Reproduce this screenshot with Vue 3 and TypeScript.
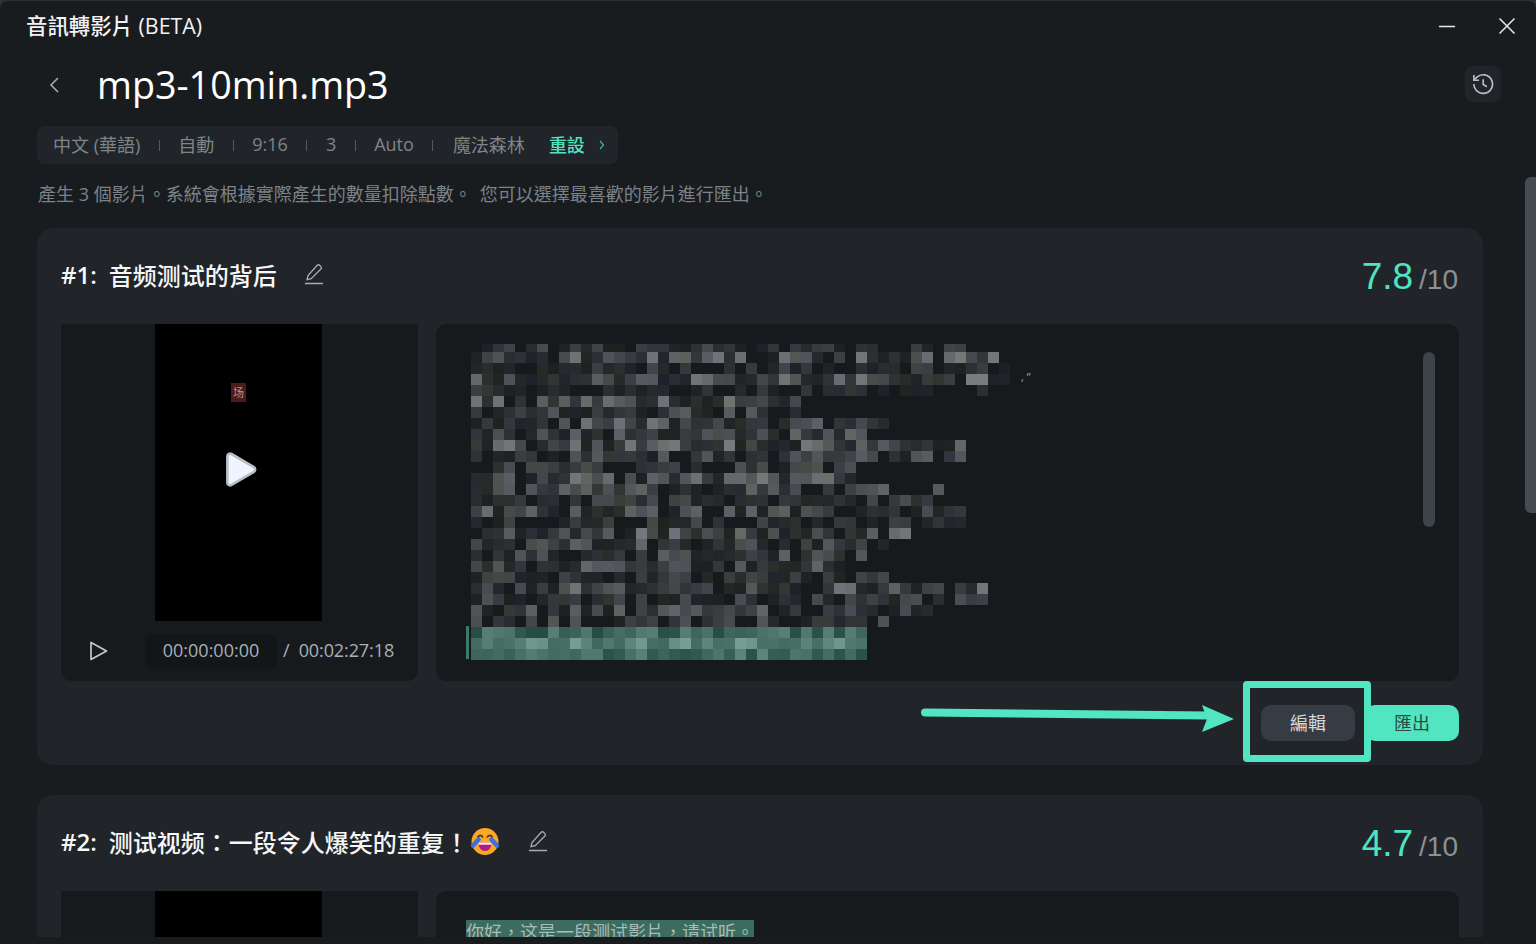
<script setup lang="ts">
import { computed } from 'vue'

interface Clip {
  id: number
  title: string
  score: string
  emoji: boolean
  blurred: boolean
}

interface Cell {
  key: string
  x: number
  y: number
  h: number
  fill: string
}

const tags = ['中文 (華語)', '自動', '9:16', '3', 'Auto', '魔法森林']

const clips: Clip[] = [
  { id: 1, title: '音频测试的背后', score: '7.8', emoji: false, blurred: true },
  { id: 2, title: '测试视频：一段令人爆笑的重复！', score: '4.7', emoji: true, blurred: false }
]

// right edge of each blurred line, in px from the left of the text
const rowEnds = [
  490, 528, 538, 538, 538, 330, 330, 418, 396, 495, 506, 396, 385, 473, 462, 495, 495, 440, 418, 396,
  396, 418, 517, 517, 462, 451, 396, 396, 396
]

// how bright each blurred line is, read off the reference
const rowGain = [
  0.5, 1.05, 0.4, 1.05, 0.35, 1, 0.75, 0.95, 0.8, 1, 0.75, 0.55, 1, 0.8, 0.5, 0.85, 0.45, 1, 0.8, 0.8,
  0.8, 0.45, 1, 0.55, 0.95, 0.6, 1, 1, 1
]

const cells = computed<Cell[]>(() => {
  let seed = 7919
  const rnd = () => {
    seed = (seed * 16807) % 2147483647
    return seed / 2147483647
  }
  const out: Cell[] = []
  rowEnds.forEach((end, r) => {
    const green = r >= 26
    const gain = rowGain[r]
    const y = r === 0 ? 0 : 8 + (r - 1) * 11
    const h = r === 0 ? 8 : 11
    for (let c = 0; c * 11 < end; c++) {
      const v = rnd()
      const l = rnd()
      if (green) {
        const boost = r === 27 ? 32 : r === 26 ? 4 : 10
        const k = Math.pow(l, 1.6) * 55 + boost
        out.push({
          key: `${r}-${c}`,
          x: 5 + c * 11,
          y,
          h,
          fill: `rgb(${Math.round(32 + k)},${Math.round(72 + k)},${Math.round(62 + k)})`
        })
        continue
      }
      if (v < 0.1 + (1 - gain) * 0.45) continue
      const k = 30 + Math.pow(l, 1.5) * 88 * gain
      const tint = rnd() * 10 - 3
      out.push({
        key: `${r}-${c}`,
        x: 5 + c * 11,
        y,
        h,
        fill: `rgb(${Math.round(k)},${Math.round(k + 3)},${Math.round(k + tint + 3)})`
      })
    }
  })
  return out
})
</script>

<template>
  <div class="window">
    <header class="titlebar">
      <span class="app-name">音訊轉影片 (BETA)</span>
      <div class="window-btns">
        <svg width="18" height="18" viewBox="0 0 18 18"><path d="M1 9.500h16" stroke="#e6e8ea" stroke-width="1.400" /></svg>
        <svg width="18" height="18" viewBox="0 0 18 18">
          <path d="M1.500 1.500l15 15M16.500 1.500l-15 15" stroke="#e6e8ea" stroke-width="1.500" fill="none" />
        </svg>
      </div>
    </header>

    <main class="main">
      <div class="scroll-thumb"></div>

      <div class="file-head">
        <svg class="back" width="12" height="18" viewBox="0 0 12 18">
          <path d="M10 2L3 9l7 7" stroke="#a9afb4" stroke-width="1.500" fill="none" />
        </svg>
        <h1 class="file-name">mp3-10min.mp3</h1>
        <button class="history">
          <svg width="26" height="26" viewBox="0 0 24 24" fill="none" stroke="#b9bec2" stroke-width="1.500">
            <path d="M3.600 12a8.600 8.600 0 1 0 2.800-6.300L3.800 8.200" />
            <path d="M3.600 3.800v4.700h4.700" />
            <path d="M12.200 7.600v4.900l3.400 2" />
          </svg>
        </button>
      </div>

      <div class="tagbar">
        <template v-for="(tag, i) in tags" :key="tag">
          <span class="tag">{{ tag }}</span>
          <i v-if="i < tags.length - 1" class="sep"></i>
        </template>
        <span class="reset">重設</span>
        <svg width="6" height="10" viewBox="0 0 6 10" class="reset-arrow">
          <path d="M1 1l3.500 4-3.500 4" stroke="#3fb79c" stroke-width="1.200" fill="none" />
        </svg>
      </div>

      <p class="hint">
        <span>產生 3 個影片。系統會根據實際產生的數量扣除點數。</span>
        <span class="hint-rest">您可以選擇最喜歡的影片進行匯出。</span>
      </p>

      <section v-for="clip in clips" :key="clip.id" class="card">
        <div class="card-head">
          <div class="card-title">
            <span class="num">#{{ clip.id }}:</span>
            <span>{{ clip.title }}</span>
            <svg v-if="clip.emoji" class="emoji" width="28" height="29" viewBox="0 0 28 29">
              <circle cx="14" cy="14.500" r="13.500" fill="#f9a825" />
              <path d="M6.500 10.500c1.200-2.800 4.300-2.800 5.500 0M16 10.500c1.200-2.800 4.300-2.800 5.500 0" stroke="#4a3320" stroke-width="1.700" fill="none" />
              <path d="M7.500 15.500h13c0 5-2.700 8.500-6.500 8.500s-6.500-3.500-6.500-8.500z" fill="#b5197e" />
              <path d="M7.500 15.500h13v2.200h-13z" fill="#f4eef0" />
              <path d="M7.500 12.500L2 18.500M20.500 12.500l5.500 6" stroke="#3f6fd8" stroke-width="4.500" stroke-linecap="round" fill="none" />
            </svg>
            <svg class="pencil" width="20" height="22" viewBox="0 0 20 22" fill="none">
              <path
                d="M13.200 2.300a1.700 1.700 0 0 1 2.400 0l1.300 1.300a1.700 1.700 0 0 1 0 2.400L7.200 15.700l-4.200 1 1-4.200z"
                stroke="#a8adb1"
                stroke-width="1.300"
              />
              <path d="M1 20.500h18" stroke="#a8adb1" stroke-width="1.500" />
            </svg>
          </div>
          <div class="score">
            <span class="score-value">{{ clip.score }}</span>
            <span class="score-max">/10</span>
          </div>
        </div>

        <div class="panels">
          <div class="player">
            <div class="stage">
              <template v-if="clip.blurred">
                <span class="caption">场</span>
                <svg class="stage-play" width="36" height="40" viewBox="0 0 34 38">
                  <path
                    d="M5 6c0-2 2.200-3.200 3.900-2.200l21.300 12.500c1.600 1 1.600 3.400 0 4.400L8.900 33.200C7.200 34.200 5 33 5 31z"
                    fill="#eef5ff"
                    stroke="#b8bfc7"
                    stroke-width="2.500"
                    stroke-linejoin="round"
                  />
                </svg>
              </template>
            </div>
            <div class="controls">
              <svg width="20" height="22" viewBox="0 0 20 22">
                <path d="M3 2.500v17l15.500-8.500z" fill="none" stroke="#c4c8cc" stroke-width="1.700" stroke-linejoin="round" />
              </svg>
              <span class="timecode">00:00:00:00</span>
              <span class="duration">/&nbsp;&nbsp;00:02:27:18</span>
            </div>
          </div>

          <div class="transcript" :class="{ 'transcript-plain': !clip.blurred }">
            <template v-if="clip.blurred">
              <svg class="mosaic" width="580" height="322" viewBox="0 0 580 322">
                <rect v-for="cell in cells" :key="cell.key" :x="cell.x" :y="cell.y" width="11" :height="cell.h" :fill="cell.fill" />
                <rect x="0" y="282" width="3" height="33" fill="#3c7a6a" />
                <text x="555" y="37" class="stray">, ”</text>
              </svg>
              <div class="text-thumb"></div>
            </template>
            <span v-else class="highlight">你好，这是一段测试影片，请试听。</span>
          </div>
        </div>

        <div class="actions">
          <button class="btn btn-edit">編輯</button>
          <button class="btn btn-export">匯出</button>
          <template v-if="clip.id === 1">
            <div class="callout"></div>
            <svg class="callout-arrow" width="316" height="30" viewBox="0 0 316 30">
              <path d="M4 7.500L286 10.500" stroke="#52e5c1" stroke-width="8" stroke-linecap="round" />
              <path d="M281 0l32 14-32 13 5-13z" fill="#52e5c1" />
            </svg>
          </template>
        </div>
      </section>
    </main>
  </div>
</template>

<style>
html,
body {
  margin: 0;
  background: #2c3136;
}
</style>

<style scoped>
.window {
  position: relative;
  box-sizing: border-box;
  width: 1536px;
  height: 944px;
  display: flex;
  flex-direction: column;
  padding-bottom: 7px;
  overflow: hidden;
  background: #191c1f;
  border-top: 1px solid #2c3136;
  border-radius: 8px 8px 0 0;
  font-family: 'Open Sans', 'Noto Sans CJK TC', sans-serif;
  color: #fff;
}

.titlebar {
  flex: none;
  height: 49px;
  display: flex;
  align-items: center;
  justify-content: space-between;
  padding: 0 20px 0 26px;
}

.app-name {
  margin-bottom: 3px;
  font-size: 21.4px;
  font-weight: 500;
  color: #f2f3f4;
}

.window-btns {
  display: flex;
  gap: 42px;
}

.main {
  position: relative;
  flex: 1;
  min-height: 0;
  overflow: hidden;
  padding: 0 53px 0 37px;
}

.scroll-thumb {
  position: absolute;
  top: 127px;
  right: 0;
  width: 11px;
  height: 336px;
  border-radius: 6px 0 0 6px;
  background: #454c52;
}

.file-head {
  position: relative;
  box-sizing: border-box;
  height: 76px;
  display: flex;
  align-items: center;
  padding-bottom: 7px;
}

.back {
  margin-left: 11px;
}

.file-name {
  margin: 0 0 0 37px;
  font-size: 37.7px;
  font-weight: 400;
  line-height: 1;
}

.history {
  position: absolute;
  top: 16px;
  right: -18px;
  width: 36px;
  height: 36px;
  display: flex;
  align-items: center;
  justify-content: center;
  padding: 0;
  border: none;
  border-radius: 8px;
  background: #212529;
}

.tagbar {
  width: 581px;
  height: 38px;
  box-sizing: border-box;
  display: flex;
  align-items: center;
  padding: 0 0 3px 16px;
  border-radius: 8px;
  background: #212529;
  font-size: 18px;
  color: #7d858b;
}

.tag:nth-of-type(6) {
  margin-left: 1px;
}

.sep {
  width: 1px;
  height: 11px;
  margin: 3px 18.5px 0;
  background: #555b60;
}

.reset {
  margin-left: 24px;
  font-weight: 500;
  color: #4fe3c1;
}

.reset-arrow {
  margin: 3px 0 0 14px;
}

.hint {
  margin: 18px 0 22px 1px;
  font-size: 18px;
  line-height: 24px;
  color: #7b8288;
  white-space: nowrap;
}

.hint-rest {
  margin-left: 8px;
}

.card {
  margin-bottom: 30px;
  padding: 24px;
  border-radius: 16px;
  background: #212529;
}

.card-head {
  height: 48px;
  display: flex;
  align-items: center;
  justify-content: space-between;
  margin-bottom: 24px;
}

.card-title {
  display: flex;
  align-items: center;
  padding-bottom: 4px;
  font-size: 24px;
  font-weight: 500;
  color: #f5f7f8;
}

.num {
  margin-right: 12px;
  font-weight: 600;
}

.emoji {
  margin: 0 2px;
}

.pencil {
  margin-left: 27px;
}

.score {
  display: flex;
  align-items: baseline;
  gap: 6px;
  padding: 2px 1px 0 0;
  font-family: 'Liberation Sans', sans-serif;
}

.score-value {
  font-size: 37px;
  color: #4fe3c1;
}

.score-max {
  font-size: 28px;
  color: #8a9197;
}

.panels {
  display: grid;
  grid-template-columns: 357px 1023px;
  gap: 18px;
  height: 357px;
}

.player {
  display: flex;
  flex-direction: column;
  border-radius: 0 0 10px 10px;
  background: #171a1d;
}

.stage {
  position: relative;
  width: 167px;
  height: 297px;
  margin-left: 94px;
  background: #000;
}

.caption {
  position: absolute;
  top: 59px;
  left: 76px;
  width: 15px;
  height: 19px;
  background: #4f1a18;
  font-family: 'Noto Sans CJK SC', sans-serif;
  font-size: 11px;
  line-height: 19px;
  text-align: center;
  color: #b98f8c;
}

.stage-play {
  position: absolute;
  top: 126px;
  left: 67px;
}

.controls {
  flex: 1;
  display: flex;
  align-items: center;
  padding-left: 27px;
  font-size: 18px;
  color: #a8b0b6;
}

.timecode {
  width: 132px;
  height: 35px;
  margin: 0 6px 0 37px;
  border-radius: 8px;
  background: #131618;
  line-height: 33px;
  text-align: center;
}

.duration {
  margin-bottom: 2px;
  letter-spacing: -0.1px;
}

.transcript {
  position: relative;
  overflow: hidden;
  padding: 20px 0 0 30px;
  border-radius: 10px;
  background: #171a1d;
}

.transcript-plain {
  padding-top: 29px;
}

.mosaic {
  display: block;
}

.stray {
  font-size: 11px;
  fill: #8fa6c0;
}

.text-thumb {
  position: absolute;
  top: 28px;
  left: 987px;
  width: 12px;
  height: 175px;
  border-radius: 6px;
  background: #3d4349;
}

.highlight {
  display: inline-block;
  background: #3c6b5f;
  font-size: 18px;
  line-height: 24px;
  color: #a9bcb6;
}

.actions {
  position: relative;
  display: flex;
  justify-content: flex-end;
  gap: 10px;
  margin-top: 24px;
}

.btn {
  width: 94px;
  height: 36px;
  padding: 0 0 2px;
  border: none;
  border-radius: 10px;
  font-family: 'Open Sans', 'Noto Sans CJK TC', sans-serif;
  font-size: 18px;
}

.btn-edit {
  background: #363c44;
  color: #d4d7da;
}

.btn-export {
  background: #52e5c1;
  color: #2c4a42;
}

.callout {
  position: absolute;
  top: -24px;
  right: 88px;
  box-sizing: border-box;
  width: 128px;
  height: 81px;
  border: 7px solid #52e5c1;
  border-radius: 4px;
}

.callout-arrow {
  position: absolute;
  top: 0;
  left: 860px;
}
</style>
